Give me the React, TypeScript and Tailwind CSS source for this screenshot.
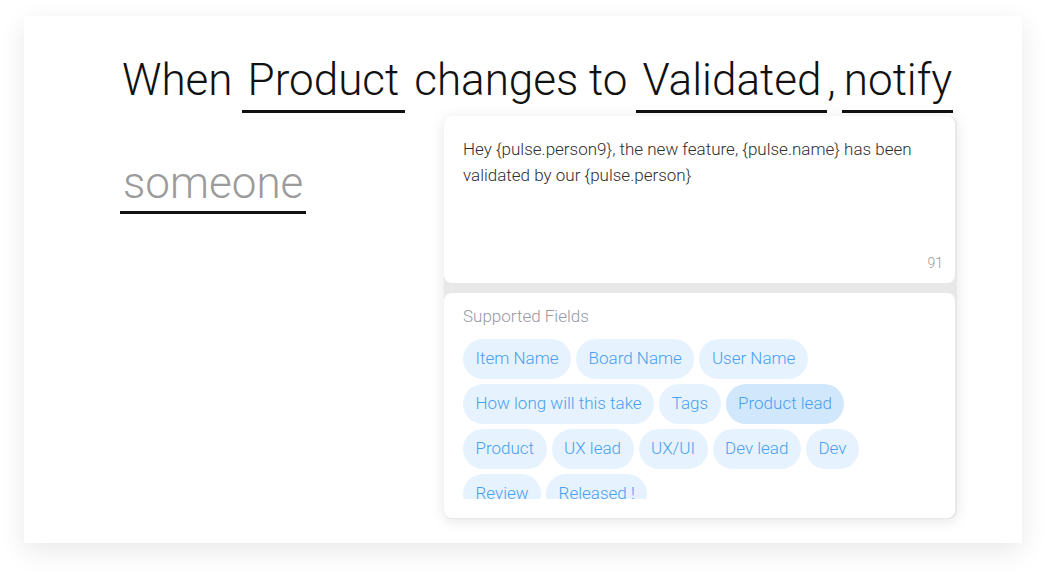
import React from "react";

const fields = [
  { label: "Item Name" },
  { label: "Board Name" },
  { label: "User Name" },
  { label: "How long will this take" },
  { label: "Tags" },
  { label: "Product lead", active: true },
  { label: "Product" },
  { label: "UX lead" },
  { label: "UX/UI" },
  { label: "Dev lead" },
  { label: "Dev" },
  { label: "Review" },
  { label: "Released !" },
];

function Blank({ children, className = "" }: { children: React.ReactNode; className?: string }) {
  return (
    <span className={`border-b-[3px] border-[#111] px-[6px] pb-[4px] ${className}`}>
      {children}
    </span>
  );
}

function FieldChip({ label, active }: { label: string; active?: boolean }) {
  return (
    <div
      className={`flex h-[40px] items-center rounded-full px-[12.5px] text-[17px] font-light text-[#4a9ff0] ${
        active ? "bg-[#d1e8fc]" : "bg-[#e6f3fe]"
      }`}
    >
      {label}
    </div>
  );
}

export default function App() {
  return (
    <div
      className="min-h-screen bg-white pl-[24px] pt-[16px]"
      style={{ fontFamily: "Roboto, 'Liberation Sans', sans-serif" }}
    >
      <div className="relative h-[527px] w-[998px] bg-white shadow-[0_8px_26px_rgba(0,0,0,0.09)]">
        <div className="flex flex-col gap-[44px] pl-[96px] pt-[38px] text-[44px] font-light leading-[52px]">
          <div className="flex items-start whitespace-nowrap pl-[2px] text-[#111]">
            <span>When</span>
            <Blank className="ml-[9px]">Product</Blank>
            <span className="ml-[9px]">changes to</span>
            <Blank className="ml-[9px]">Validated</Blank>
            <span>,</span>
            <Blank className="ml-[6px] pl-[2px] pr-[1px]">notify</Blank>
          </div>
          <div className="flex">
            <span className="border-b-[3px] border-[#111] px-[3px] pb-[2px] text-[#9b9b9b]">
              someone
            </span>
          </div>
        </div>

        <div className="absolute left-[420px] top-[100px] flex h-[403px] w-[513px] flex-col gap-[10px] rounded-lg bg-[#e8e8e8] pb-[1px] pr-[2px] shadow-[0_2px_14px_rgba(0,0,0,0.1)]">
          <div className="relative h-[167px] rounded-lg bg-white px-[19px] pt-[20px] text-[17px] font-light leading-[26px] text-[#2f2f2f]">
            <p>
              Hey {"{pulse.person9}"}, the new feature, {"{pulse.name}"} has been validated by our{" "}
              {"{pulse.person}"}
            </p>
            <span className="absolute bottom-[7px] right-[12px] text-[14px] font-light text-[#999]">91</span>
          </div>
          <div className="flex flex-1 flex-col rounded-lg bg-white pl-[19px] pr-[33px] pt-[11px]">
            <div className="text-[17px] font-light leading-[24px] text-[#9699a6]">Supported Fields</div>
            <div className="mt-[11px] flex h-[160px] flex-wrap content-start gap-[5px] overflow-hidden">
              {fields.map((f) => (
                <FieldChip key={f.label} label={f.label} active={f.active} />
              ))}
            </div>
          </div>
        </div>
      </div>
    </div>
  );
}
